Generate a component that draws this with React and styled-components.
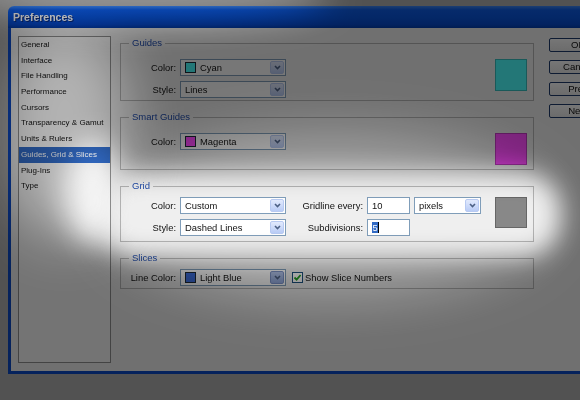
import React from 'react';
import styled, { createGlobalStyle } from 'styled-components';

const Global = createGlobalStyle`
  html, body { margin: 0; padding: 0; background: #b0b0b0; }
  body { width: 580px; height: 400px; overflow: hidden; font-family: "Liberation Sans", Arial, sans-serif; }
  * { box-sizing: border-box; }
`;

const Page = styled.div`
  position: relative;
  width: 580px;
  height: 400px;
  overflow: hidden;
  background: #b0b0b0;
  padding: 6px 0 0 8px;
  font-family: "Liberation Sans", Arial, sans-serif;
`;

const Window = styled.div`
  width: 640px;
  display: flex;
  flex-direction: column;
`;

const TitleBar = styled.div`
  height: 22px;
  border-radius: 6px 6px 0 0;
  background: linear-gradient(#3d86f2 0%, #0c5be6 18%, #0753dc 55%, #0548cc 85%, #003cae 100%);
  color: #fff;
  font: bold 10.5px "Liberation Sans", Arial, sans-serif;
  display: flex;
  align-items: center;
  padding-left: 5px;
  text-shadow: 1px 1px 0 #0a2a7a;
`;

const Body = styled.div`
  display: flex;
  align-items: flex-start;
  height: 346px;
  background: #efefef;
  border-left: 3px solid #0a48c4;
  border-bottom: 3px solid #0a48c4;
  padding: 8px 0 0 7px;
`;

const Sidebar = styled.ul`
  list-style: none;
  margin: 0;
  padding: 0;
  width: 93px;
  height: 327px;
  flex-shrink: 0;
  border: 1px solid #8e8e8e;
  background: #f8f8f8;
`;

const Item = styled.li`
  height: 15.7px;
  line-height: 15.7px;
  font-size: 8px;
  padding-left: 2px;
  white-space: nowrap;
  color: ${p => (p.$active ? '#ffffff' : '#111')};
  background: ${p => (p.$active ? '#316ac5' : 'transparent')};
`;

const Content = styled.div`
  width: 414px;
  flex-shrink: 0;
  margin: 1px 0 0 9px;
  display: flex;
  flex-direction: column;
  gap: 10px;
`;

const Group = styled.fieldset`
  margin: 0;
  min-width: 0;
  border: 1px solid #b4b4b4;
  padding: ${p => p.$pt}px 6px ${p => p.$pb}px 5px;
  display: flex;
  align-items: flex-start;
`;

const Legend = styled.legend`
  padding: 0 3px;
  margin-left: 3px;
  font-size: 9.5px;
  line-height: 12px;
  color: #1f4aa8;
`;

const Rows = styled.div`
  display: grid;
  grid-template-columns: ${p => p.$cols};
  column-gap: 4px;
  row-gap: 5px;
  align-items: center;
`;

const Label = styled.span`
  font-size: 9.4px;
  color: #111;
  text-align: right;
  white-space: nowrap;
`;

const Select = styled.div`
  display: flex;
  align-items: center;
  gap: 4px;
  height: 17px;
  border: 1px solid #7f9db9;
  background: #fff;
  padding-left: 4px;
  font-size: 9.4px;
  color: #111;
  white-space: nowrap;
`;

const Arrow = styled.span`
  margin-left: auto;
  margin-right: 1px;
  width: 14px;
  height: 13px;
  display: flex;
  align-items: center;
  justify-content: center;
  border-radius: 2px;
  border: 1px solid ${p => (p.$hot ? '#7d93c9' : '#b8caf2')};
  background: ${p => (p.$hot ? 'linear-gradient(#b4c6ec, #93abe0)' : 'linear-gradient(#e2eafd, #b9ccf6)')};
`;

const Chip = styled.span`
  width: 11px;
  height: 11px;
  border: 1px solid #1e2a36;
  background: ${p => p.$color};
  flex-shrink: 0;
`;

const Input = styled.div`
  display: flex;
  align-items: center;
  height: 17px;
  border: 1px solid #7f9db9;
  background: #fff;
  padding-left: 4px;
  font-size: 9.4px;
  color: #111;
`;

const Selected = styled.span`
  background: #316ac5;
  color: #fff;
  padding: 0 0.5px;
  border-right: 1px solid #000;
`;

const Swatch = styled.div`
  margin-left: auto;
  width: 32px;
  height: ${p => p.$h || 32}px;
  background: ${p => p.$color};
  border: 1px solid rgba(0, 0, 0, 0.25);
  flex-shrink: 0;
`;

const CheckRow = styled.label`
  display: flex;
  align-items: center;
  gap: 2px;
  margin-left: 2px;
  font-size: 9.4px;
  color: #111;
  white-space: nowrap;
`;

const Box = styled.span`
  width: 11px;
  height: 11px;
  border: 1px solid #1c5180;
  background: #fff;
  display: flex;
  align-items: center;
  justify-content: center;
`;

const Buttons = styled.div`
  display: flex;
  flex-direction: column;
  gap: 8px;
  margin: 2px 0 0 15px;
`;

const Button = styled.div`
  width: 58px;
  height: 14px;
  border: 1px solid #1d3a6a;
  border-radius: 2px;
  background: linear-gradient(#fdfdfd, #e6e6e6);
  font-size: 9.6px;
  line-height: 12px;
  text-align: center;
  color: #111;
`;

/* darkening layer laid over the whole screenshot, with soft light spots */
const Spotlight = styled.div`
  position: absolute;
  inset: 0;
  pointer-events: none;
  overflow: hidden;
  mix-blend-mode: multiply;
  background: #777777;
`;

const Glow = styled.div`
  position: absolute;
  left: ${p => p.$x}px;
  top: ${p => p.$y}px;
  width: ${p => p.$w}px;
  height: ${p => p.$h}px;
  border-radius: ${p => p.$r};
  background: #ffffff;
  opacity: ${p => p.$a};
  filter: blur(${p => p.$blur}px);
`;

const Chevron = () => (
  <svg width="7" height="5" viewBox="0 0 7 5">
    <path d="M1 1 L3.5 3.5 L6 1" fill="none" stroke="#4d6185" strokeWidth="1.6" />
  </svg>
);

const Dropdown = ({ chip, children, hot }) => (
  <Select>
    {chip && <Chip $color={chip} />}
    <span>{children}</span>
    <Arrow $hot={hot}><Chevron /></Arrow>
  </Select>
);

const items = [
  'General', 'Interface', 'File Handling', 'Performance', 'Cursors',
  'Transparency & Gamut', 'Units & Rulers', 'Guides, Grid & Slices', 'Plug-Ins', 'Type',
];

export default function App() {
  return (
    <>
      <Global />
      <Page>
        <Window>
          <TitleBar>Preferences</TitleBar>
          <Body>
            <Sidebar>
              {items.map(t => (
                <Item key={t} $active={t === 'Guides, Grid & Slices'}>{t}</Item>
              ))}
            </Sidebar>
            <Content>
              <Group $pt={10} $pb={2}>
                <Legend>Guides</Legend>
                <Rows $cols="50px 106px">
                  <Label>Color:</Label>
                  <Dropdown chip="#4affff">Cyan</Dropdown>
                  <Label>Style:</Label>
                  <Dropdown>Lines</Dropdown>
                </Rows>
                <Swatch $color="#4affff" />
              </Group>
              <Group $pt={10} $pb={4}>
                <Legend>Smart Guides</Legend>
                <Rows $cols="50px 106px">
                  <Label>Color:</Label>
                  <Dropdown chip="#ff4aff">Magenta</Dropdown>
                </Rows>
                <Swatch $color="#ff4aff" />
              </Group>
              <Group $pt={5} $pb={5}>
                <Legend>Grid</Legend>
                <Rows $cols="50px 106px 73px 43px 67px">
                  <Label>Color:</Label>
                  <Dropdown>Custom</Dropdown>
                  <Label>Gridline every:</Label>
                  <Input>10</Input>
                  <Dropdown>pixels</Dropdown>
                  <Label>Style:</Label>
                  <Dropdown>Dashed Lines</Dropdown>
                  <Label>Subdivisions:</Label>
                  <Input><Selected>5</Selected></Input>
                  <span />
                </Rows>
                <Swatch $color="#888888" $h={31} />
              </Group>
              <Group $pt={5} $pb={2}>
                <Legend>Slices</Legend>
                <Rows $cols="50px 106px auto">
                  <Label>Line Color:</Label>
                  <Dropdown chip="#3d6fe0" hot>Light Blue</Dropdown>
                  <CheckRow>
                    <Box>
                      <svg width="9" height="9" viewBox="0 0 9 9">
                        <path d="M1.5 4.5 L3.6 6.6 L7.6 2" fill="none" stroke="#21a121" strokeWidth="1.8" />
                      </svg>
                    </Box>
                    Show Slice Numbers
                  </CheckRow>
                </Rows>
              </Group>
            </Content>
            <Buttons>
              <Button>OK</Button>
              <Button>Cancel</Button>
              <Button>Prev</Button>
              <Button>Next</Button>
            </Buttons>
          </Body>
        </Window>
        <Spotlight>
          <Glow $x={110} $y={135} $w={440} $h={160} $r="50%" $blur={28} $a={0.4} />
          <Glow $x={100} $y={174} $w={460} $h={82} $r="36px" $blur={12} $a={1} />
          <Glow $x={64} $y={140} $w={58} $h={104} $r="50%" $blur={14} $a={0.95} />
          <Glow $x={0} $y={20} $w={130} $h={220} $r="50%" $blur={28} $a={0.48} />
          <Glow $x={-50} $y={-34} $w={380} $h={54} $r="50%" $blur={18} $a={0.75} />
        </Spotlight>
      </Page>
    </>
  );
}
